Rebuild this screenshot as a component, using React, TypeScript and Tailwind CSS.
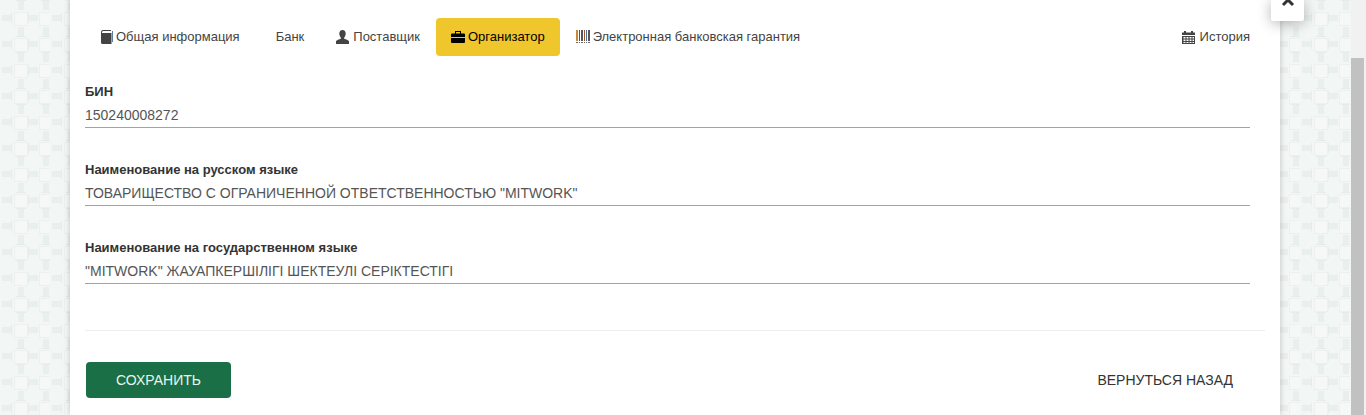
import React from "react";

const Book = () => (
  <svg width="13" height="14" viewBox="0 0 13 14" className="shrink-0">
    <path d="M3 0h8v1H3.500C2.800 1 2 1.600 2 2.400V3h9.500v11H2.500C1 14 1 13 1 12V2.500C1 1 1.800 0 3 0z" fill="#444" />
    <path d="M12 1h1v11h-1z" fill="#5a7ea0" />
  </svg>
);
const UserIcon = () => (
  <svg width="13" height="14" viewBox="0 0 13 14" className="shrink-0">
    <path d="M6.500 0C8.600 0 9.700 1.500 9.700 3.600c0 1.600-.7 3-1.500 3.900v1.300c1.700.6 4.300 1.500 4.800 2.500V14H0v-2.700c.5-1 3.100-1.900 4.800-2.500V7.500C4 6.600 3.300 5.200 3.300 3.600 3.300 1.500 4.400 0 6.500 0z" fill="#444" />
  </svg>
);
const Briefcase = ({ c = "#000" }: { c?: string }) => (
  <svg width="14" height="12" viewBox="0 0 14 12" className="shrink-0">
    <path d="M4 0h6v2.500h3a1 1 0 0 1 1 1V6H0V3.500a1 1 0 0 1 1-1h3V0zm1 1v1.500h4V1H5z" fill={c} fillRule="evenodd" />
    <path d="M0 7h14v4a1 1 0 0 1-1 1H1a1 1 0 0 1-1-1V7z" fill={c} />
  </svg>
);
const Barcode = () => (
  <svg width="14" height="14" viewBox="0 0 14 14" className="shrink-0">
    <path d="M0 0h2v11H0z" fill="#c98a3c" />
    <path d="M3 0h1v11H3zM5 0h2v11H5z" fill="#555" />
    <path d="M8 0h1v11H8z" fill="#a0522d" />
    <path d="M10 0h1v11h-1z" fill="#4a6fa0" />
    <path d="M12 0h2v11h-2z" fill="#555" />
    <path d="M0 12h2v1H0zM3 12h1v1H3zM5 12h2v1H5zM8 12h1v1H8zM10 12h1v1h-1zM12 12h2v1h-2z" fill="#666" />
  </svg>
);
const Calendar = () => (
  <svg width="13" height="13" viewBox="0 0 13 13" className="shrink-0">
    <path d="M2 0h2v1.500h5V0h2v1.500h2V4H0V1.500h2V0z" fill="#444" />
    <path d="M0 5h13v8H0V5zm1.500 1v1.500h2V6h-2zm3 0v1.500h2V6h-2zm3 0v1.500h2V6h-2zm3 0v1.500h1.500V6H10.500zm-9 2.500V10h2V8.500h-2zm3 0V10h2V8.500h-2zm3 0V10h2V8.500h-2zm3 0V10h1.500V8.500H10.500zM1.500 11v1h2v-1h-2zm3 0v1h2v-1h-2zm3 0v1h2v-1h-2zm3 0v1h1.500v-1H10.500z" fill="#444" fillRule="evenodd" />
  </svg>
);

const Field = ({ label, value }: { label: string; value: string }) => (
  <div className="h-[78px] w-[1165px]">
    <div className="h-[23px] pt-[2px] text-[13px] leading-[20px] font-bold text-[#333]">{label}</div>
    <div className="h-[25px] border-b border-[#ada486] text-[14px] leading-[24px] text-[#555]">{value}</div>
  </div>
);

export default function App() {
  return (
    <div className="relative flex h-[415px] w-[1366px] overflow-hidden bg-[#f2f6f5] font-['Liberation_Sans',Arial,sans-serif]">
      <svg className="absolute inset-0 h-full w-full" aria-hidden="true">
        <defs>
          <g id="mot">
            <path d="M-3 0h6v9h-6z" fill="#e9efed" />
            <path d="M-5 9.500h10" stroke="#e6eceb" strokeWidth="1" />
          </g>
          <pattern id="tile" width="50" height="52" patternUnits="userSpaceOnUse">
            <g>
              <rect x="14.500" y="12.500" width="13" height="13" fill="#f5f8f7" stroke="#ecf1ef" />
              <rect x="39.500" y="12.500" width="13" height="13" fill="#f5f8f7" stroke="#ecf1ef" />
              <rect x="14.500" y="38.500" width="13" height="13" fill="#f5f8f7" stroke="#ecf1ef" />
              <rect x="39.500" y="38.500" width="13" height="13" fill="#f5f8f7" stroke="#ecf1ef" />
              <use href="#mot" transform="translate(21 10) scale(1 -1)" />
              <use href="#mot" transform="translate(46 10) scale(1 -1)" />
              <use href="#mot" transform="translate(21 27)" />
              <use href="#mot" transform="translate(46 27)" />
              <use href="#mot" transform="translate(2 18) rotate(90) scale(1 -1)" />
              <use href="#mot" transform="translate(38 18) rotate(90)" />
              <use href="#mot" transform="translate(2 44) rotate(90) scale(1 -1)" />
              <use href="#mot" transform="translate(38 44) rotate(90)" />
            </g>
          </pattern>
        </defs>
        <rect width="100%" height="100%" fill="url(#tile)" />
      </svg>

      <main className="relative ml-[70px] h-full w-[1210px] bg-white pt-[18px] pl-[15px] shadow-[0_0_6px_rgba(0,0,0,0.22)]">
        <nav className="flex h-[38px] w-[1180px] items-center text-[13px] text-[#444]">
          <a className="flex h-full items-center gap-[3px] px-[15px]"><Book />Общая информация</a>
          <a className="ml-[6px] flex h-full items-center px-[15px]">Банк</a>
          <a className="ml-[2px] flex h-full items-center gap-[4px] px-[15px]"><UserIcon />Поставщик</a>
          <a className="ml-[1px] flex h-full items-center gap-[3px] rounded-[4px] bg-[#efc62c] px-[15px] text-black"><Briefcase />Организатор</a>
          <a className="ml-[1px] flex h-full items-center gap-[3px] px-[15px]"><Barcode />Электронная банковская гарантия</a>
          <a className="ml-auto flex h-full items-center gap-[5px] px-[15px]"><Calendar />История</a>
        </nav>
        <section className="mt-[24px]">
          <Field label="БИН" value="150240008272" />
          <Field label="Наименование на русском языке" value={'ТОВАРИЩЕСТВО С ОГРАНИЧЕННОЙ ОТВЕТСТВЕННОСТЬЮ "MITWORK"'} />
          <Field label="Наименование на государственном языке" value={'"MITWORK" ЖАУАПКЕРШІЛІГІ ШЕКТЕУЛІ СЕРІКТЕСТІГІ'} />
        </section>
        <div className="mt-[16px] w-[1180px] border-t border-[#eeeeee]" />
        <footer className="mt-[31px] flex w-[1165px] items-center justify-between pl-[1px]">
          <button className="h-[36px] w-[145px] rounded-[4px] bg-[#1a6f46] text-[14px] text-[#e8f5ee]">СОХРАНИТЬ</button>
          <button className="mr-[17px] text-[14px] text-[#333]">ВЕРНУТЬСЯ НАЗАД</button>
        </footer>
      </main>

      <div className="absolute top-0 left-[1271px] flex h-[21px] w-[33px] items-start justify-center rounded-b-[2px] bg-white shadow-[0_2px_14px_rgba(0,0,0,0.3)]">
        <svg width="14" height="9" viewBox="0 0 14 9" className="mt-[-2px]"><path d="M2 7l5-5 5 5" fill="none" stroke="#333" strokeWidth="3" /></svg>
      </div>

      <aside className="absolute top-0 right-0 h-full w-[15px] bg-[#f1f1f1]">
        <div className="mt-[58px] h-[357px] w-[13px] bg-[#c1c1c1]" />
      </aside>
    </div>
  );
}
